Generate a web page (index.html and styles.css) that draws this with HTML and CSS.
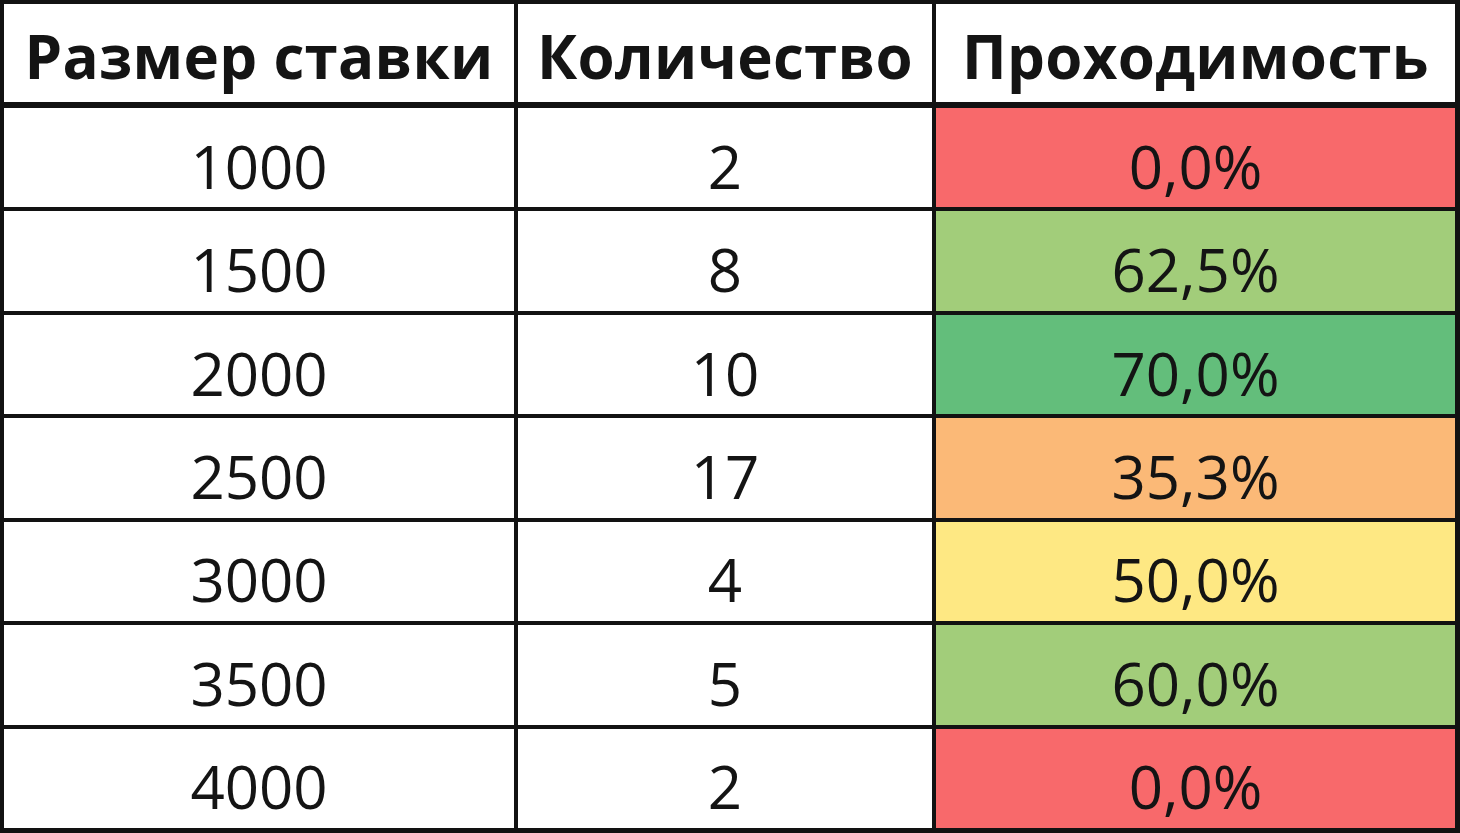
FILE: index.html
```html
<!DOCTYPE html>
<html lang="ru">
<head>
<meta charset="utf-8">
<title>Проходимость</title>
<link rel="stylesheet" href="styles.css">
</head>
<body>
<div class="sheet">
  <div class="cell head">Размер ставки</div>
  <div class="cell head">Количество</div>
  <div class="cell head">Проходимость</div>

  <div class="cell">1000</div><div class="cell">2</div><div class="cell red">0,0%</div>
  <div class="cell">1500</div><div class="cell">8</div><div class="cell lgreen">62,5%</div>
  <div class="cell">2000</div><div class="cell">10</div><div class="cell green">70,0%</div>
  <div class="cell">2500</div><div class="cell">17</div><div class="cell orange">35,3%</div>
  <div class="cell">3000</div><div class="cell">4</div><div class="cell yellow">50,0%</div>
  <div class="cell">3500</div><div class="cell">5</div><div class="cell lgreen">60,0%</div>
  <div class="cell">4000</div><div class="cell">2</div><div class="cell red">0,0%</div>
</div>
</body>
</html>
```
FILE: styles.css
```css
html, body {
  margin: 0;
  padding: 0;
  background: #ffffff;
}
.sheet {
  box-sizing: border-box;
  width: 1460px;
  height: 833px;
  padding: 4px 5px 5px 4px;
  background: #121212;
  display: grid;
  grid-template-columns: 510px 414px 1fr;
  grid-template-rows: 100px repeat(7, 1fr);
  gap: 4px;
  font-family: "Open Sans", "Liberation Sans", sans-serif;
  color: #141414;
}
.cell {
  background: #ffffff;
  display: flex;
  align-items: center;
  justify-content: center;
  font-size: 60px;
  line-height: 1;
  padding-top: 16px;
  box-sizing: border-box;
}
.head {
  font-weight: 700;
  font-size: 60px;
  margin-bottom: 2px;
  padding-top: 6px;
  letter-spacing: 0.3px;
}
.red { background: #f8696b; }
.lgreen { background: #a2cd7a; }
.green { background: #63be7b; }
.orange { background: #fbb977; }
.yellow { background: #fee883; }
```
